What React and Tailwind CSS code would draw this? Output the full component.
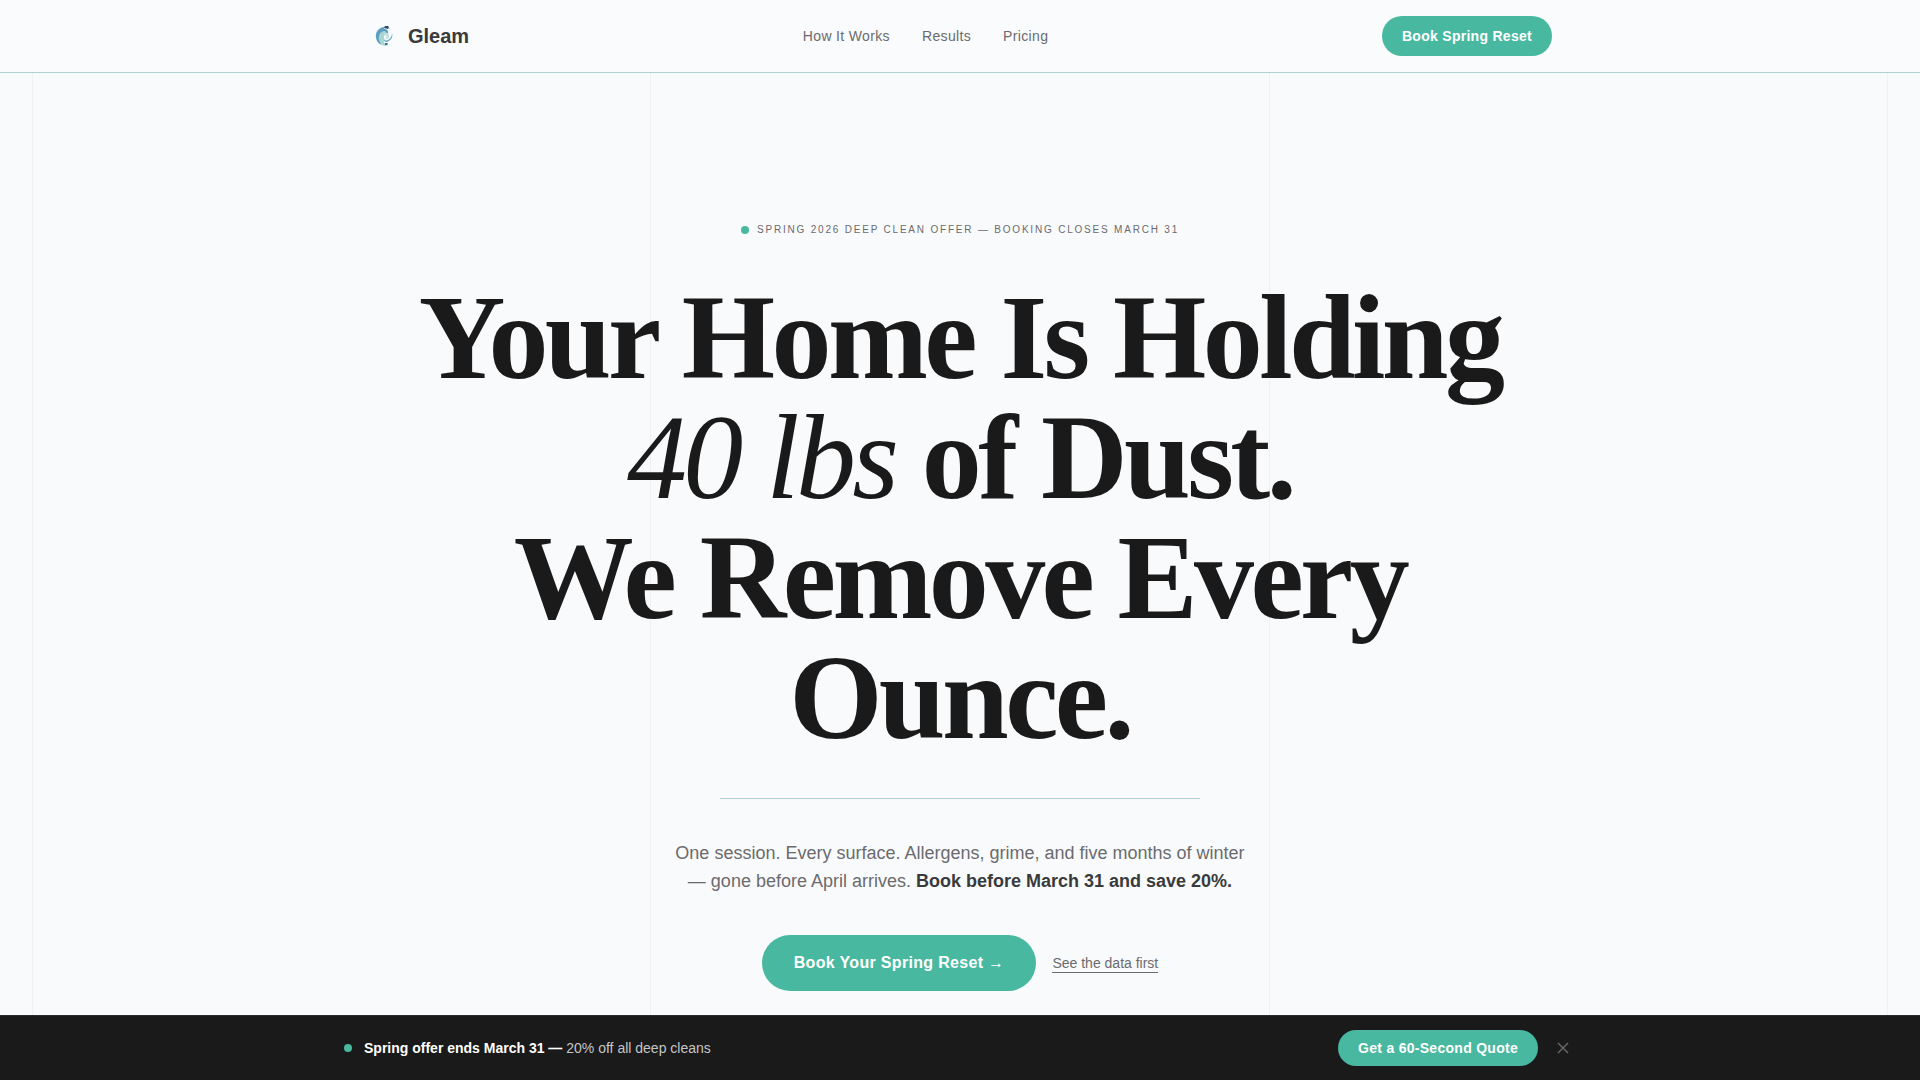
function Logo() {
  return (
    <svg className="h-8 w-8" viewBox="0 0 32 32" aria-hidden="true">
      <path d="M17 7C10 7 7 13 8 18c1 4 3 6 6 7-3-4-3-8 0-11 2-2 5-2 6 0 1-3-1-5-4-5z" fill="#5b9fc2" />
      <path d="M17 11c-5 0-7 5-6 9 1 3 3 6 7 6 1 0 2-1 2-2-4 0-5-2-3-4-2-3-1-6 2-6z" fill="#a9d6d2" />
      <path d="M20 8c4 2 5 6 3 9-2 3-4 4-7 3 1 3 3 2 5 1 3-2 4-5 3-8-1-3-2-5-4-5z" fill="#68a9c9" />
      <path d="M16 14c2-2 5-1 5 2 0 2-2 4-4 3 2-1 2-3-1-5z" fill="#bfe3df" />
      <path d="M16 8l1-2h3l1 1-1 2z" fill="#2f4a70" />
      <path d="M17 23l3 0-1 2-2 0z" fill="#3f7894" />
    </svg>
  );
}

const links = [
  { label: "How It Works", href: "#how" },
  { label: "Results", href: "#results" },
  { label: "Pricing", href: "#pricing" },
];

export default function App() {
  return (
    <div className="flex h-screen flex-col overflow-hidden bg-[#f9fafc] font-['Liberation_Sans',sans-serif] text-[#1a1a1a]">
      <header className="shrink-0 border-b border-[#aed2d8] bg-[#f9fbfc]">
        <div className="mx-auto flex h-18 max-w-7xl items-center justify-between px-12">
          <a href="#top" className="flex items-center gap-2 text-xl font-bold text-[#3a3a3c]">
            <Logo />
            Gleam
          </a>
          <nav className="flex gap-8 text-sm tracking-wide text-[#6b6b6e]">
            {links.map((link) => (
              <a key={link.label} href={link.href}>{link.label}</a>
            ))}
          </nav>
          <button className="h-10 rounded-full bg-[#48b8a0] px-5 text-sm font-bold tracking-[0.02em] text-white">
            Book Spring Reset
          </button>
        </div>
      </header>

      <main className="relative min-h-0 flex-1">
        <div className="absolute inset-x-8 inset-y-0 grid grid-cols-3 border-l border-[#eef0f2]" aria-hidden="true">
          <div className="border-r border-[#eef0f2]" />
          <div className="border-r border-[#eef0f2]" />
          <div className="border-r border-[#eef0f2]" />
        </div>
        <section className="relative mx-auto flex max-w-[1100px] flex-col items-center pt-[149px] text-center">
          <p className="flex items-center gap-2 text-[10px] leading-4 tracking-[0.18em] text-[#6b6b6e] uppercase">
            <span className="size-2 rounded-full bg-[#48b8a0]" />
            Spring 2026 Deep Clean Offer — Booking Closes March 31
          </p>
          <h1 className="mt-10 font-['Liberation_Serif',serif] text-[120px] leading-none font-bold tracking-[-0.03em]">
            Your Home Is Holding
            <br />
            <em className="font-normal">40 lbs</em> of Dust.
            <br />
            We Remove Every Ounce.
          </h1>
          <hr className="mt-10 w-[480px] border-[#b0d0da]" />
          <p className="mt-10 max-w-[580px] text-lg leading-7 text-[#6b6b6e]">
            One session. Every surface. Allergens, grime, and five months of winter — gone before April arrives.{" "}
            <strong className="text-[#3a3a3c]">Book before March 31 and save 20%.</strong>
          </p>
          <div className="mt-10 flex items-center gap-4">
            <button className="h-14 rounded-full bg-[#48b8a0] px-8 text-base font-bold tracking-[0.02em] text-white">
              Book Your Spring Reset →
            </button>
            <a href="#results" className="border-b border-[#6b6b6e] text-sm leading-[18px] text-[#6b6b6e]">
              See the data first
            </a>
          </div>
        </section>
      </main>

      <footer className="shrink-0 border-t border-[#2b2b2b] bg-[#1a1a1a]">
        <div className="mx-auto flex h-16 max-w-7xl items-center justify-between px-6">
          <p className="flex items-center gap-3 text-sm text-[#c5c5c7]">
            <span className="size-2 rounded-full bg-[#48b8a0]" />
            <span>
              <strong className="text-white">Spring offer ends March 31 —</strong> 20% off all deep cleans
            </span>
          </p>
          <div className="flex items-center gap-3">
            <button className="h-9 rounded-full bg-[#48b8a0] px-5 text-sm font-bold tracking-[0.02em] text-white">
              Get a 60-Second Quote
            </button>
            <button aria-label="Dismiss offer" className="flex h-6 w-[26px] items-center justify-center text-[#6b6b6e]">
              <svg className="size-3" viewBox="0 0 12 12" fill="none" stroke="currentColor" strokeWidth="1.4" aria-hidden="true">
                <path d="M1 1l10 10M11 1L1 11" />
              </svg>
            </button>
          </div>
        </div>
      </footer>
    </div>
  );
}
